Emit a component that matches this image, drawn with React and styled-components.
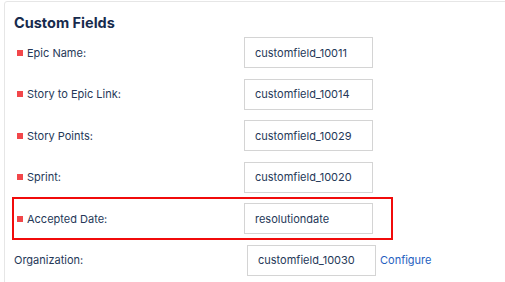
import React from "react";
import styled, { createGlobalStyle } from "styled-components";

const GlobalStyle = createGlobalStyle`
  html, body {
    margin: 0;
    padding: 0;
    background: #ffffff;
    overflow: hidden;
  }
  body {
    font-family: Inter, "Noto Sans", Arial, sans-serif;
    color: #172b4d;
  }
`;

const fields = [
  { label: "Epic Name:", value: "customfield_10011", required: true },
  { label: "Story to Epic Link:", value: "customfield_10014", required: true },
  { label: "Story Points:", value: "customfield_10029", required: true },
  { label: "Sprint:", value: "customfield_10020", required: true },
  { label: "Accepted Date:", value: "resolutiondate", required: true, highlight: true },
  { label: "Organization:", value: "customfield_10030", configurable: true },
];

const App = () => {
  return (
    <>
      <GlobalStyle />
      <Page>
        <Card>
          <Title>Custom Fields</Title>
          {fields.map((f) => (
            <Row key={f.label} $highlight={f.highlight}>
              <Label $wide={f.configurable}>
                {f.required && <Marker />}
                {f.label}
              </Label>
              <FieldBox>{f.value}</FieldBox>
              {f.configurable && <ConfigureLink href="#">Configure</ConfigureLink>}
            </Row>
          ))}
        </Card>
      </Page>
    </>
  );
};

export default App;

const Page = styled.div`
  width: 505px;
  height: 282px;
  overflow: hidden;
  padding: 1px 0 0 4px;
  box-sizing: border-box;
`;

const Card = styled.div`
  width: 540px;
  height: 320px;
  border: 1px solid #e6e6e6;
  border-radius: 3px;
  box-sizing: border-box;
  padding: 0 9px;
`;

const Title = styled.h2`
  margin: 0;
  padding-top: 11px;
  height: 20px;
  font-size: 14.5px;
  font-weight: 700;
  line-height: 20px;
  color: #172b4d;
`;

const Row = styled.div`
  display: flex;
  align-items: center;
  width: 377px;
  height: 39px;
  margin-bottom: 2.5px;
  outline: ${(p) => (p.$highlight ? "2px solid #f10b0b" : "none")};
`;

const Label = styled.div`
  display: flex;
  align-items: center;
  width: ${(p) => (p.$wide ? "233px" : "230px")};
  flex-shrink: 0;
  font-size: 11px;
  color: #253858;
`;

const Marker = styled.span`
  display: inline-block;
  width: 6px;
  height: 6px;
  background: #f2474a;
  margin: 0 4px 0 3px;
`;

const FieldBox = styled.div`
  flex-shrink: 0;
  box-sizing: border-box;
  width: 129px;
  height: 31px;
  border: 1px solid #d4d4d4;
  padding: 0 10px;
  display: flex;
  align-items: center;
  font-size: 11px;
  color: #253858;
`;

const ConfigureLink = styled.a`
  margin-left: 4px;
  font-size: 11px;
  color: #1f5fbf;
  text-decoration: none;
  white-space: nowrap;
`;
